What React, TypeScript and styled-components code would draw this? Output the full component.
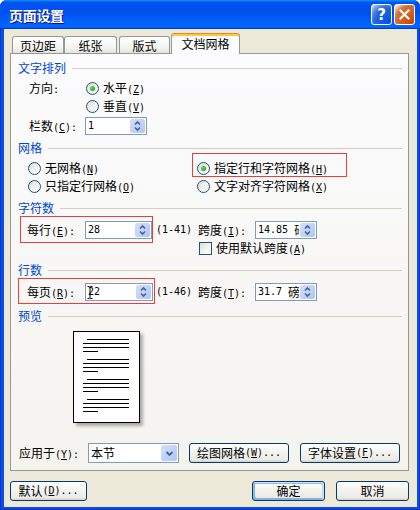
import React from 'react';
import styled, { createGlobalStyle, css } from 'styled-components';

const GlobalStyle = createGlobalStyle`
  html, body { margin: 0; padding: 0; background: #ffffff; }
  body {
    font-family: "Noto Sans CJK SC", "Noto Sans", sans-serif;
    font-size: 12px;
    line-height: 1;
    color: #000;
  }
  *, *::before, *::after { box-sizing: border-box; }
`;

/* ---------- text helpers ---------- */
const Latin = styled.span`
  font-family: "DejaVu Sans Mono", "Liberation Mono", monospace;
  font-size: 10px;
  white-space: pre;
`;
const Key = styled.span`
  text-decoration: underline;
  text-underline-offset: 1px;
`;

function Txt({ t }: { t: string }) {
  const parts = t.split(/([\x00-\x7F]+)/).filter((s) => s.length > 0);
  return (
    <>
      {parts.map((p, i) => {
        if (!/^[\x00-\x7F]+$/.test(p)) return <React.Fragment key={i}>{p}</React.Fragment>;
        const amp = p.indexOf('&');
        if (amp < 0) return <Latin key={i}>{p}</Latin>;
        return (
          <Latin key={i}>
            {p.slice(0, amp)}
            <Key>{p[amp + 1]}</Key>
            {p.slice(amp + 2)}
          </Latin>
        );
      })}
    </>
  );
}

/* ---------- window chrome ---------- */
const Window = styled.div`
  width: 420px;
  height: 510px;
  display: flex;
  flex-direction: column;
  background: #0A50DF;
  box-shadow: inset 1px 0 #0831D9, inset -1px 0 #0831D9, inset 0 -1px #0831D9;
  border-radius: 7px 7px 0 0;
  overflow: hidden;
`;

const TitleBar = styled.div`
  height: 29px;
  flex: none;
  display: flex;
  align-items: center;
  justify-content: space-between;
  padding: 0 5px 0 9px;
  background: linear-gradient(180deg, #0997ff, #0053ee 8%, #0050ee 40%, #0066ff 88%, #0066ff 93%, #005bff 95%, #003dd7 96%, #003dd7);
`;

const TitleText = styled.div`
  color: #fff;
  font-weight: bold;
  font-size: 14px;
  letter-spacing: -0.3px;
  text-shadow: 1px 1px #0f1089;
`;

const CaptionButtons = styled.div`
  display: flex;
  gap: 2px;
`;

const CaptionButton = styled.div<{ $kind: 'help' | 'close' }>`
  width: 21px;
  height: 21px;
  border: 1px solid #fff;
  border-radius: 3px;
  display: flex;
  align-items: center;
  justify-content: center;
  color: #fff;
  ${(p) =>
    p.$kind === 'help'
      ? css`
          background: radial-gradient(circle at 90% 90%, #0054e9 0%, #2263d5 55%, #4479e4 70%, #a3bbec 90%, #fff 100%);
        `
      : css`
          background: radial-gradient(circle at 90% 90%, #cc4600 0%, #dc6527 55%, #cd7546 70%, #ffccb2 90%, #fff 100%);
        `}
`;

const HelpMark = styled.span`
  font-family: "DejaVu Sans", sans-serif;
  font-weight: bold;
  font-size: 15px;
  line-height: 1;
  margin-top: 1px;
`;

const Body = styled.div`
  flex: 1;
  margin: 0 3px 3px 4px;
  background: #ece9d8;
  display: flex;
  flex-direction: column;
  padding: 4px 8px 6px 6px;
`;

/* ---------- tabs ---------- */
const TabStrip = styled.div`
  height: 21px;
  flex: none;
  display: flex;
  align-items: flex-end;
  padding-left: 2px;
  margin-bottom: -1px;
  position: relative;
  z-index: 1;
`;

const Tab = styled.div<{ $w: number; $ml?: number; $active?: boolean }>`
  width: ${(p) => p.$w}px;
  margin-left: ${(p) => p.$ml ?? 0}px;
  display: flex;
  align-items: center;
  justify-content: center;
  border: 1px solid #919b9c;
  border-bottom: none;
  border-radius: 3px 3px 0 0;
  ${(p) =>
    p.$active
      ? css`
          height: 21px;
          padding-bottom: 1px;
          background: #fcfcfe;
          border-top: 1px solid #e68b2c;
          box-shadow: inset 0 2px #ffc73c;
        `
      : css`
          height: 17px;
          margin-bottom: 1px;
          padding-top: 1px;
          background: linear-gradient(180deg, #ffffff 0%, #f3f3ef 70%, #e4e2d8 100%);
        `}
`;

const Panel = styled.div`
  flex: 1;
  display: flex;
  flex-direction: column;
  border: 1px solid #919b9c;
  background: linear-gradient(180deg, #fcfcfe, #f4f3ee);
  padding: 0 6px 7px 7px;
`;

/* ---------- panel content ---------- */
const GroupHeader = styled.div<{ $mt: number }>`
  display: flex;
  align-items: center;
  gap: 6px;
  height: 16px;
  margin-top: ${(p) => p.$mt}px;
  color: #0046d5;
  &::after {
    content: '';
    flex: 1;
    height: 1px;
    background: #d0d0bf;
  }
`;

const Row = styled.div<{ $mt?: number; $pl?: number; $h?: number }>`
  display: flex;
  align-items: center;
  height: ${(p) => p.$h ?? 18}px;
  margin-top: ${(p) => p.$mt ?? 0}px;
  padding-left: ${(p) => p.$pl ?? 0}px;
  white-space: nowrap;
`;

const Cell = styled.div<{ $w?: number; $ml?: number }>`
  display: flex;
  align-items: center;
  height: 100%;
  ${(p) => (p.$w ? `width: ${p.$w}px; flex: none;` : '')}
  margin-left: ${(p) => p.$ml ?? 0}px;
`;

const FieldLabel = styled.div<{ $w: number }>`
  width: ${(p) => p.$w}px;
  flex: none;
`;

const Marked = styled.div<{ $inset: string; $w?: number }>`
  position: relative;
  display: flex;
  align-items: center;
  height: 100%;
  ${(p) => (p.$w ? `width: ${p.$w}px; flex: none;` : '')}
  &::after {
    content: '';
    position: absolute;
    inset: ${(p) => p.$inset};
    border: 1px solid #ee3b3b;
    pointer-events: none;
  }
`;

const Option = styled.div`
  display: flex;
  align-items: center;
  gap: 4px;
`;

const RadioCircle = styled.span<{ $on?: boolean }>`
  width: 13px;
  height: 13px;
  flex: none;
  border-radius: 50%;
  border: 1px solid #1c5180;
  background: linear-gradient(135deg, #dcdcd7 0%, #f4f4f1 60%, #ffffff 100%);
  display: flex;
  align-items: center;
  justify-content: center;
  &::after {
    content: '';
    display: ${(p) => (p.$on ? 'block' : 'none')};
    width: 5px;
    height: 5px;
    border-radius: 50%;
    background: radial-gradient(circle at 35% 35%, #5fe35a 0%, #2fb02b 60%, #1e8f1c 100%);
  }
`;

const CheckSquare = styled.span`
  width: 13px;
  height: 13px;
  flex: none;
  border: 1px solid #1c5180;
  background: linear-gradient(135deg, #dcdcd7 0%, #f4f4f1 60%, #ffffff 100%);
`;

function Radio({ on, label }: { on?: boolean; label: string }) {
  return (
    <Option>
      <RadioCircle $on={on} />
      <span>
        <Txt t={label} />
      </span>
    </Option>
  );
}

/* ---------- spin / combo ---------- */
const SpinBox = styled.div<{ $w: number }>`
  width: ${(p) => p.$w}px;
  height: 18px;
  flex: none;
  border: 1px solid #7f9db9;
  background: #fff;
  display: flex;
  position: relative;
`;

const SpinText = styled.div`
  flex: 1;
  min-width: 0;
  display: flex;
  align-items: center;
  padding-left: 2px;
  overflow: hidden;
  white-space: nowrap;
`;

const SpinButton = styled.div`
  width: 15px;
  margin: 1px;
  flex: none;
  border-radius: 2px;
  background: linear-gradient(135deg, #d3e0fd 0%, #c1d3fb 50%, #b0c5f5 100%);
  display: flex;
  align-items: center;
  justify-content: center;
`;

const Cursor = styled.svg`
  position: absolute;
  left: 1px;
  top: 1px;
  pointer-events: none;
`;

function Spin({ w, value, cursor }: { w: number; value: string; cursor?: boolean }) {
  return (
    <SpinBox $w={w}>
      <SpinText>
        <Txt t={value} />
      </SpinText>
      <SpinButton>
        <svg width="13" height="14" viewBox="0 0 13 14">
          <polyline points="4,5.5 6.5,3 9,5.5" fill="none" stroke="#4d6185" strokeWidth="1.6" />
          <polyline points="4,8.5 6.5,11 9,8.5" fill="none" stroke="#4d6185" strokeWidth="1.6" />
        </svg>
      </SpinButton>
      {cursor && (
        <Cursor width="6" height="16" viewBox="0 0 6 16">
          <path d="M0.5 1.5h2M3.5 1.5h2M3 1.5v12M0.5 13.5h2M3.5 13.5h2" stroke="#000" strokeWidth="1" fill="none" />
        </Cursor>
      )}
    </SpinBox>
  );
}

const ComboBox = styled.div<{ $w: number }>`
  width: ${(p) => p.$w}px;
  height: 20px;
  flex: none;
  border: 1px solid #7f9db9;
  background: #fff;
  display: flex;
`;

const ComboButton = styled.div`
  width: 16px;
  margin: 1px;
  flex: none;
  border-radius: 2px;
  background: linear-gradient(135deg, #d3e0fd 0%, #c1d3fb 50%, #b0c5f5 100%);
  display: flex;
  align-items: center;
  justify-content: center;
`;

/* ---------- buttons ---------- */
const PushButton = styled.div<{ $w: number; $ml?: number; $default?: boolean }>`
  width: ${(p) => p.$w}px;
  height: 20px;
  flex: none;
  margin-left: ${(p) => p.$ml ?? 0}px;
  border: 1px solid #003c74;
  border-radius: 3px;
  background: linear-gradient(180deg, #ffffff 0%, #f4f4f0 40%, #ecebe6 86%, #d6d0c5 100%);
  display: flex;
  align-items: center;
  justify-content: center;
  white-space: nowrap;
  ${(p) =>
    p.$default &&
    css`
      box-shadow: inset -1px 1px #cee7ff, inset 1px 2px #98b8ea, inset -2px 0 #bcd4f6, inset 1px -1px #89ade4, inset 2px -2px #89ade4;
    `}
`;

const DialogButtons = styled.div`
  display: flex;
  align-items: center;
  height: 20px;
  margin-top: 10px;
  flex: none;
`;

const Spacer = styled.div`
  flex: 1;
`;

/* ---------- preview ---------- */
const PreviewPage = styled.div`
  width: 67px;
  height: 92px;
  flex: none;
  margin: 7px 0 0 55px;
  border: 1px solid #000;
  background: #fff;
  box-shadow: 3px 3px 3px rgba(0, 0, 0, 0.3);
`;

const BottomRow = styled(Row)`
  margin-top: auto;
  height: 20px;
`;

function PageLines() {
  const groups = [0, 1, 2, 3];
  return (
    <svg width="65" height="90" viewBox="0 0 65 90">
      {groups.map((g) => {
        const y = 7.5 + g * 20;
        return (
          <g key={g} stroke="#000" strokeWidth="1">
            <line x1="13" y1={y} x2="55" y2={y} />
            <line x1="9" y1={y + 4} x2="55" y2={y + 4} />
            <line x1="9" y1={y + 8} x2="55" y2={y + 8} />
            <line x1="9" y1={y + 12} x2="24" y2={y + 12} />
          </g>
        );
      })}
    </svg>
  );
}

export default function App() {
  return (
    <>
      <GlobalStyle />
      <Window>
        <TitleBar>
          <TitleText>页面设置</TitleText>
          <CaptionButtons>
            <CaptionButton $kind="help">
              <HelpMark>?</HelpMark>
            </CaptionButton>
            <CaptionButton $kind="close">
              <svg width="11" height="11" viewBox="0 0 11 11">
                <path d="M1.5 1.5L9.5 9.5M9.5 1.5L1.5 9.5" stroke="#fff" strokeWidth="2.2" strokeLinecap="square" />
              </svg>
            </CaptionButton>
          </CaptionButtons>
        </TitleBar>
        <Body>
          <TabStrip>
            <Tab $w={52}>页边距</Tab>
            <Tab $w={53}>纸张</Tab>
            <Tab $w={51} $ml={2}>版式</Tab>
            <Tab $w={69} $ml={1} $active>
              文档网格
            </Tab>
          </TabStrip>
          <Panel>
            <GroupHeader $mt={6}>文字排列</GroupHeader>
            <Row $mt={3} $pl={11}>
              <FieldLabel $w={57}>
                <Txt t="方向:" />
              </FieldLabel>
              <Radio on label="水平(&Z)" />
            </Row>
            <Row $pl={68}>
              <Radio label="垂直(&V)" />
            </Row>
            <Row $mt={2} $pl={11}>
              <FieldLabel $w={56}>
                <Txt t="栏数(&C):" />
              </FieldLabel>
              <Spin w={62} value="1" />
            </Row>

            <GroupHeader $mt={5}>网格</GroupHeader>
            <Row $mt={3} $pl={10}>
              <Cell $w={169}>
                <Radio label="无网格(&N)" />
              </Cell>
              <Marked $w={150} $inset="-6px 0 0 -5px">
                <Radio on label="指定行和字符网格(&H)" />
              </Marked>
            </Row>
            <Row $pl={10}>
              <Cell $w={169}>
                <Radio label="只指定行网格(&O)" />
              </Cell>
              <Cell>
                <Radio label="文字对齐字符网格(&X)" />
              </Cell>
            </Row>

            <GroupHeader $mt={5}>字符数</GroupHeader>
            <Row $mt={5} $pl={9}>
              <Marked $inset="-5px -1px -4px -7px">
                <FieldLabel $w={58}>
                  <Txt t="每行(&E):" />
                </FieldLabel>
                <Spin w={67} value="28" />
              </Marked>
              <Cell $w={42} $ml={4}>
                <Txt t="(1-41)" />
              </Cell>
              <FieldLabel $w={57}>
                <Txt t="跨度(&I):" />
              </FieldLabel>
              <Spin w={62} value="14.85 磅" />
            </Row>
            <Row $mt={1} $h={16} $pl={181}>
              <Option>
                <CheckSquare />
                <span>
                  <Txt t="使用默认跨度(&A)" />
                </span>
              </Option>
            </Row>

            <GroupHeader $mt={6}>行数</GroupHeader>
            <Row $mt={5} $pl={9}>
              <Marked $inset="-5px -2px -3px -9px">
                <FieldLabel $w={58}>
                  <Txt t="每页(&R):" />
                </FieldLabel>
                <Spin w={68} value="22" cursor />
              </Marked>
              <Cell $w={42} $ml={3}>
                <Txt t="(1-46)" />
              </Cell>
              <FieldLabel $w={57}>
                <Txt t="跨度(&T):" />
              </FieldLabel>
              <Spin w={62} value="31.7 磅" />
            </Row>

            <GroupHeader $mt={7}>预览</GroupHeader>
            <PreviewPage>
              <PageLines />
            </PreviewPage>

            <BottomRow $pl={1}>
              <FieldLabel $w={69}>
                <Txt t="应用于(&Y):" />
              </FieldLabel>
              <ComboBox $w={91}>
                <SpinText>本节</SpinText>
                <ComboButton>
                  <svg width="9" height="7" viewBox="0 0 9 7">
                    <polyline points="1.5,2 4.5,5 7.5,2" fill="none" stroke="#4d6185" strokeWidth="1.8" />
                  </svg>
                </ComboButton>
              </ComboBox>
              <PushButton $w={100} $ml={10}>
                <Txt t="绘图网格(&W)..." />
              </PushButton>
              <PushButton $w={100} $ml={11}>
                <Txt t="字体设置(&F)..." />
              </PushButton>
            </BottomRow>
          </Panel>
          <DialogButtons>
            <PushButton $w={77}>
              <Txt t="默认(&D)..." />
            </PushButton>
            <Spacer />
            <PushButton $w={73} $default>
              确定
            </PushButton>
            <PushButton $w={73} $ml={11}>
              取消
            </PushButton>
          </DialogButtons>
        </Body>
      </Window>
    </>
  );
}
